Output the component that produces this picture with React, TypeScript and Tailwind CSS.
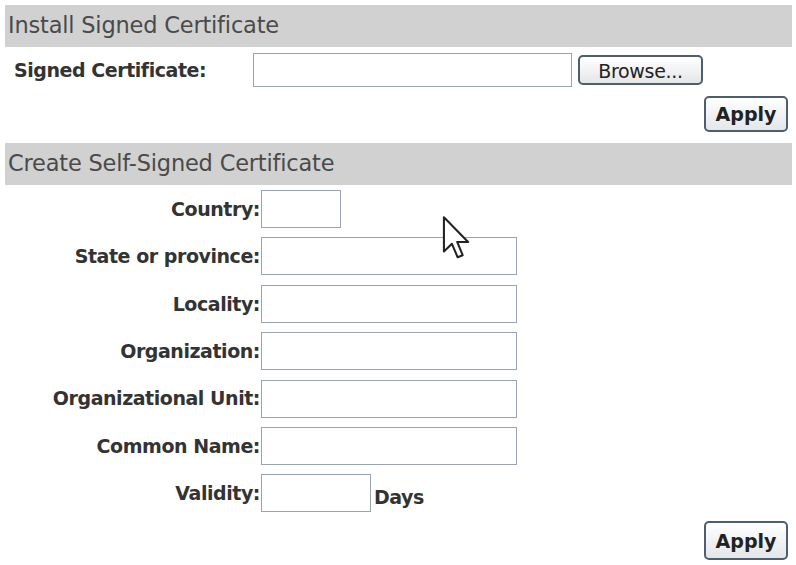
const labelFont = { fontFamily: '"DejaVu Sans", Verdana, sans-serif' }

function Field({ label, width, suffix }: { label: string; width: string; suffix?: string }) {
  return (
    <div className="flex items-center h-[38px]">
      <label className="w-[256px] text-right text-[19px] font-bold text-[#333] tracking-[-0.45px] pr-[1px]">
        {label}
      </label>
      <input
        type="text"
        className={`${width} h-[38px] border border-[#9aa4b0] bg-white outline-none`}
      />
      {suffix && (
        <span className="ml-[3px] mt-[8px] text-[19px] font-bold text-[#333] tracking-[-0.45px]">{suffix}</span>
      )}
    </div>
  )
}

function Btn({ children, className }: { children: React.ReactNode; className: string }) {
  return (
    <button
      className={`rounded-[5px] border-2 border-[#4d5e6e] bg-gradient-to-b from-white to-[#e4e6e9] text-[#222] ${className}`}
    >
      {children}
    </button>
  )
}

export default function App() {
  const fields = [
    { label: 'Country:', width: 'w-[80px]' },
    { label: 'State or province:', width: 'w-[256px]' },
    { label: 'Locality:', width: 'w-[256px]' },
    { label: 'Organization:', width: 'w-[256px]' },
    { label: 'Organizational Unit:', width: 'w-[256px]' },
    { label: 'Common Name:', width: 'w-[256px]' },
    { label: 'Validity:', width: 'w-[110px]', suffix: 'Days' },
  ]

  return (
    <div className="relative w-[796px] h-[565px] bg-white pt-[5px] pl-[5px] pr-[4px] overflow-hidden" style={labelFont}>
      <div className="h-[42px] bg-[#d1d1d1] flex items-center pl-[3px] text-[22.5px] text-[#4a4a4a] tracking-[-0.2px]">
        Install Signed Certificate
      </div>

      <div className="flex items-center mt-[6px] pl-[9px]">
        <span className="w-[239px] text-[19px] font-bold text-[#333] tracking-[-0.45px]">Signed Certificate:</span>
        <input type="text" className="w-[319px] h-[34px] border border-[#9aa4b0] outline-none" />
        <Btn className="ml-[6px] w-[125px] h-[30px] text-[19px] tracking-[-0.3px]">Browse...</Btn>
      </div>

      <div className="flex justify-end mt-[9px] pr-[4px]">
        <Btn className="w-[84px] h-[36px] text-[19px] font-bold">Apply</Btn>
      </div>

      <div className="h-[42px] mt-[11px] bg-[#d1d1d1] flex items-center pl-[3px] text-[22.5px] text-[#4a4a4a] tracking-[-0.2px]">
        Create Self-Signed Certificate
      </div>

      <div className="flex flex-col gap-[9.4px] mt-[5px]">
        {fields.map((f) => (
          <Field key={f.label} label={f.label} width={f.width} suffix={f.suffix} />
        ))}
      </div>

      <div className="flex justify-end mt-[9px] pr-[4px]">
        <Btn className="w-[84px] h-[39px] text-[19px] font-bold">Apply</Btn>
      </div>

      <svg className="absolute left-[441px] top-[215px]" width="31" height="48" viewBox="0 0 13 21">
        <path
          d="M1 1 L1 16 L4.5 12.6 L7 18.5 L9.2 17.6 L6.8 11.8 L11.6 11.8 Z"
          fill="white"
          stroke="#222"
          strokeWidth="0.9"
          strokeLinejoin="round"
        />
      </svg>
    </div>
  )
}
